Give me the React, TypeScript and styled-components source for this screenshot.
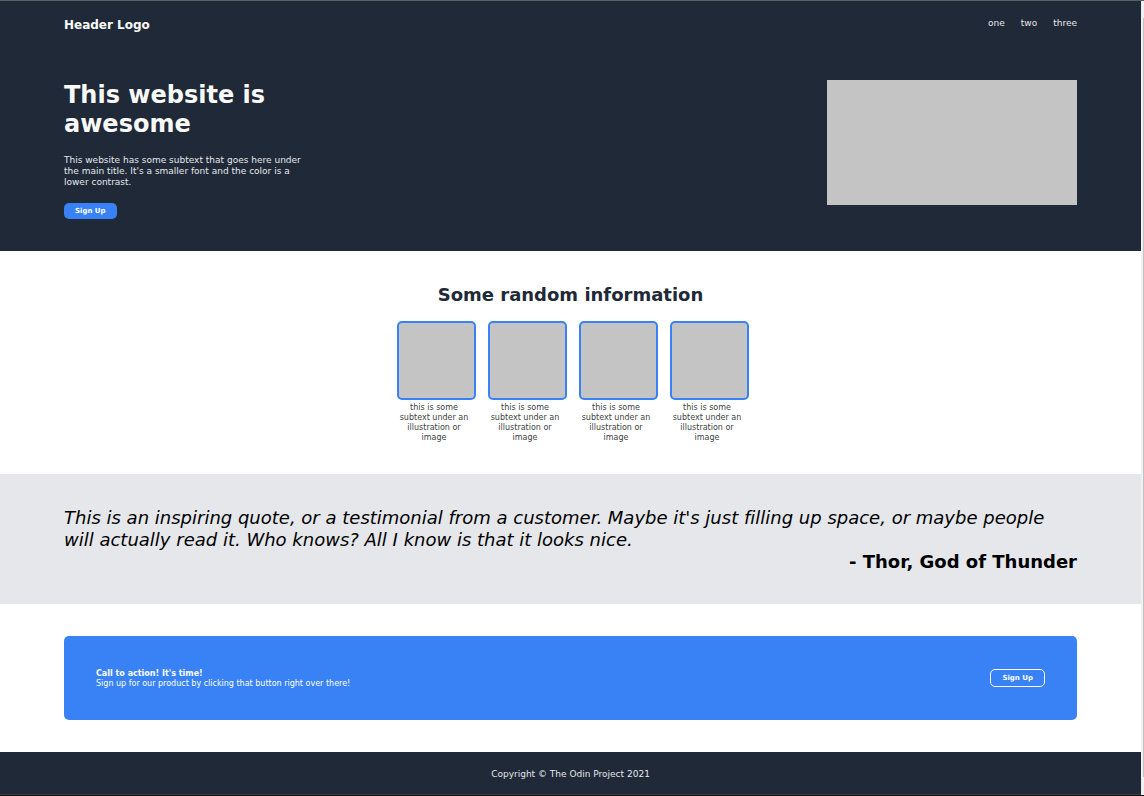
import React from "react";
import styled, { createGlobalStyle } from "styled-components";

const GlobalStyle = createGlobalStyle`
  *, *::before, *::after { box-sizing: border-box; }
  body {
    margin: 0;
    background: #fff;
    font-family: Verdana, "DejaVu Sans", sans-serif;
    font-variant-ligatures: none;
  }
  h1, h2, h3, p, ul, blockquote { margin: 0; padding: 0; }
`;

const Window = styled.div`
  display: grid;
  grid-template-columns: minmax(0, 1fr) 3px;
  min-height: 100vh;
  border-top: 1px solid #596166;
  border-bottom: 1px solid #111214;
`;

const Page = styled.div`
  display: flex;
  flex-direction: column;
  border-bottom: 1px solid #3a3c3e;
`;

const ScrollTrack = styled.div`
  padding: 17px 0 18px 2px;
  display: flex;
  background: #f0f0f0;
`;

const ScrollThumb = styled.div`
  flex: 1;
  background: #c1c1c1;
`;

const Top = styled.div`
  padding: 17px 64px 32px;
  background: #1f2937;
  color: #f9faf8;
`;

const Header = styled.header`
  display: flex;
  justify-content: space-between;
  align-items: flex-start;
`;

const Logo = styled.div`
  font-size: 12px;
  line-height: 15px;
  font-weight: 700;
`;

const NavList = styled.ul`
  display: flex;
  gap: 16px;
  list-style: none;
  font-size: 9px;
  line-height: 11px;
`;

const NavLink = styled.a`
  color: #e5e7eb;
  text-decoration: none;
`;

const Hero = styled.section`
  display: flex;
  justify-content: space-between;
  align-items: flex-start;
  padding-top: 47px;
`;

const HeroText = styled.div`
  width: 250px;
  padding-top: 1px;
`;

const Title = styled.h1`
  font-size: 24px;
  line-height: 29px;
`;

const Subtext = styled.p`
  margin: 16px 0 15px;
  font-size: 9px;
  line-height: 11px;
  color: #e5e7eb;
`;

const HeroImage = styled.div`
  width: 250px;
  height: 125px;
  background: #c4c4c4;
`;

const Button = styled.button<{ $outlined?: boolean }>`
  display: block;
  padding: 3px 11px;
  border: ${(p) => (p.$outlined ? "1px solid #fff" : "0")};
  border-radius: 5px;
  background: #3882f6;
  color: #fff;
  font-family: inherit;
  font-size: 7px;
  line-height: 10px;
  font-weight: 700;
  cursor: pointer;
`;

const Info = styled.section`
  padding: 33px 64px 31px;
  text-align: center;
`;

const InfoTitle = styled.h2`
  font-size: 18px;
  line-height: 22px;
  color: #1f2937;
`;

const Cards = styled.div`
  display: flex;
  justify-content: center;
  gap: 12px;
  margin-top: 15px;
  padding-left: 4px;
`;

const Card = styled.figure`
  width: 79px;
  margin: 0;
`;

const CardImage = styled.div`
  height: 79px;
  border: 2px solid #3882f6;
  border-radius: 5px;
  background: #c4c4c4;
`;

const Caption = styled.figcaption`
  margin-top: 3px;
  padding-right: 4px;
  font-size: 8px;
  line-height: 10px;
  color: #3c3f45;
`;

const Quote = styled.section`
  padding: 33px 64px 31px;
  background: #e5e7eb;
  color: #000;
  font-size: 18px;
  line-height: 22px;
`;

const QuoteText = styled.blockquote`
  font-style: italic;
`;

const Author = styled.p`
  font-weight: 700;
  text-align: right;
`;

const Action = styled.section`
  display: flex;
  justify-content: space-between;
  align-items: center;
  margin: 32px 64px;
  padding: 31px 32px;
  border-radius: 5px;
  background: #3882f6;
  color: #fff;
  font-size: 8px;
  line-height: 10px;
`;

const ActionText = styled.div`
  padding-top: 2px;
`;

const ActionTitle = styled.h3`
  font-size: 8px;
  line-height: 10px;
`;

const Footer = styled.footer`
  flex: 1;
  padding: 17px 64px 14px;
  background: #1f2937;
  color: #e5e7eb;
  font-size: 9px;
  line-height: 11px;
  text-align: center;
`;

const links = ["one", "two", "three"];
const cards = [1, 2, 3, 4];

export default function App() {
  return (
    <>
      <GlobalStyle />
      <Window>
        <Page>
          <Top>
            <Header>
              <Logo>Header Logo</Logo>
              <nav>
                <NavList>
                  {links.map((link) => (
                    <li key={link}>
                      <NavLink href="#">{link}</NavLink>
                    </li>
                  ))}
                </NavList>
              </nav>
            </Header>
            <Hero>
              <HeroText>
                <Title>This website is awesome</Title>
                <Subtext>
                  This website has some subtext that goes here under the main title. It's a
                  smaller font and the color is a lower contrast.
                </Subtext>
                <Button type="button">Sign Up</Button>
              </HeroText>
              <HeroImage />
            </Hero>
          </Top>
          <Info>
            <InfoTitle>Some random information</InfoTitle>
            <Cards>
              {cards.map((card) => (
                <Card key={card}>
                  <CardImage />
                  <Caption>this is some subtext under an illustration or image</Caption>
                </Card>
              ))}
            </Cards>
          </Info>
          <Quote>
            <QuoteText>
              This is an inspiring quote, or a testimonial from a customer. Maybe it's just
              filling up space, or maybe people will actually read it. Who knows? All I know is
              that it looks nice.
            </QuoteText>
            <Author>- Thor, God of Thunder</Author>
          </Quote>
          <Action>
            <ActionText>
              <ActionTitle>Call to action! It's time!</ActionTitle>
              <p>Sign up for our product by clicking that button right over there!</p>
            </ActionText>
            <Button type="button" $outlined>
              Sign Up
            </Button>
          </Action>
          <Footer>Copyright © The Odin Project 2021</Footer>
        </Page>
        <ScrollTrack>
          <ScrollThumb />
        </ScrollTrack>
      </Window>
    </>
  );
}
